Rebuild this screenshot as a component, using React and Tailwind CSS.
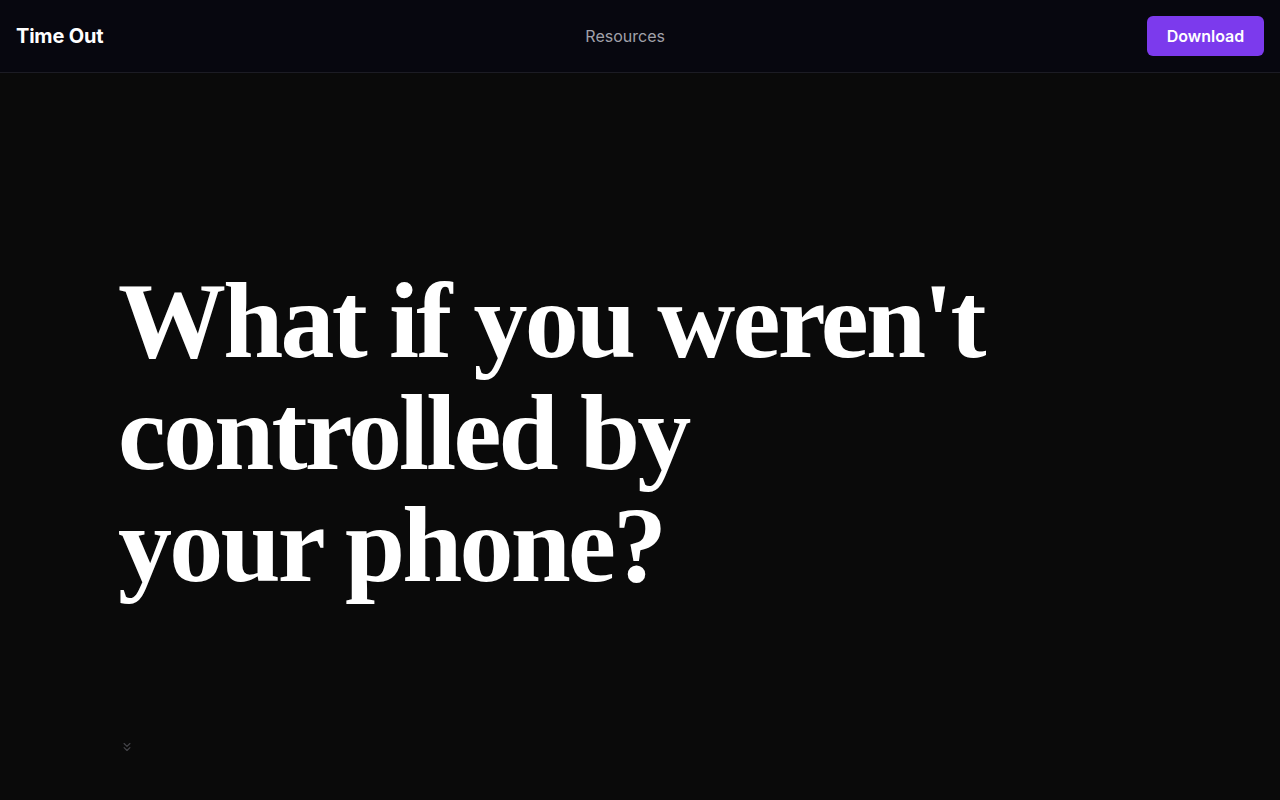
import { ChevronsDown } from 'lucide-react'

export default function App() {
  return (
    <div className="min-h-screen bg-[#0a0a0a] text-white" style={{ fontFamily: 'Inter, "Noto Sans", sans-serif' }}>
      <header className="h-[73px] bg-[#07070f] border-b border-[#1c1c24] px-4 flex items-center justify-between">
        <div className="text-[20px] font-bold tracking-[-0.01em]">Time Out</div>
        <nav className="text-[16px] text-[#a1a1aa]">Resources</nav>
        <button className="h-10 w-[117px] rounded-md bg-[#7c3aed] text-[16px] font-semibold text-white">
          Download
        </button>
      </header>
      <main className="h-[727px] px-[118px] flex flex-col">
        <h1
          className="mt-[192px] text-[108px] leading-[112px] font-bold tracking-[-0.026em] text-white"
          style={{ fontFamily: '"Liberation Serif", "DejaVu Serif", serif' }}
        >
          What if you weren't
          <br />
          controlled by
          <br />
          your phone?
        </h1>
        <div className="mt-[139px] ml-[2px] w-4 h-4 text-[#45454a]">
          <ChevronsDown size={14} strokeWidth={2} />
        </div>
      </main>
    </div>
  )
}
